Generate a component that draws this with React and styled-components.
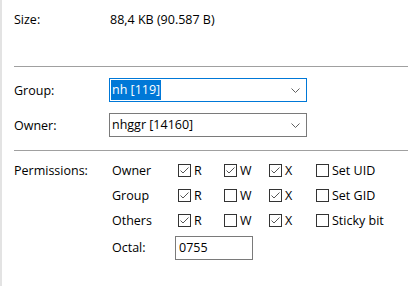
import styled, { createGlobalStyle } from 'styled-components';

const GlobalStyle = createGlobalStyle`
  html, body {
    margin: 0;
    padding: 0;
    background: #ffffff;
  }
  body {
    font-family: "Open Sans", "Noto Sans", sans-serif;
    font-size: 12.5px;
    color: #000000;
  }
`;

const Page = styled.div`
  box-sizing: border-box;
  width: 414px;
  height: 286px;
  border-left: 2px solid #e3e3e3;
  padding: 0 6px 0 12px;
  overflow: hidden;
`;

const InfoRow = styled.div`
  display: grid;
  grid-template-columns: 96px 1fr;
  align-items: center;
  height: 20px;
  padding-top: 9px;
`;

const Separator = styled.hr`
  margin: ${(p) => p.$top}px 0 0 0;
  border: 0;
  border-top: 1px solid #a0a0a0;
  height: 0;
`;

const FieldRow = styled.div`
  display: grid;
  grid-template-columns: 95px 198px;
  align-items: center;
  margin-top: ${(p) => p.$top}px;
`;

const Combo = styled.div`
  box-sizing: border-box;
  height: 24px;
  border: 1px solid ${(p) => (p.$focused ? '#0078d7' : '#7a7a7a')};
  display: flex;
  align-items: center;
  padding: 0 6px 0 1px;
  background: #fff;
`;

const ComboText = styled.span`
  flex: 1;
  display: flex;
  align-items: center;
`;

const Selected = styled.span`
  display: inline-block;
  height: 20px;
  line-height: 20px;
  padding: 0 1px 0 1px;
  background: ${(p) => (p.$active ? '#0078d7' : 'transparent')};
  color: ${(p) => (p.$active ? '#ffffff' : '#000000')};
`;

const PermSection = styled.div`
  display: grid;
  grid-template-columns: 98px 1fr;
  margin-top: 7px;
`;

const PermLabel = styled.div`
  height: 25px;
  line-height: 25px;
`;

const PermGrid = styled.div`
  display: grid;
  grid-template-columns: 66px 46px 45px 47px 1fr;
  grid-auto-rows: 25px;
  align-items: center;
`;

const CheckLabel = styled.label`
  display: flex;
  align-items: center;
  gap: 3px;
`;

const Box = styled.span`
  box-sizing: border-box;
  width: 13px;
  height: 13px;
  border: 1px solid #333333;
  background: #fff;
  display: flex;
  align-items: center;
  justify-content: center;
`;

const OctalRow = styled.div`
  grid-column: 1 / -1;
  display: grid;
  grid-template-columns: 63px 78px;
  align-items: center;
  margin-top: 4px;
`;

const Field = styled.div`
  box-sizing: border-box;
  height: 24px;
  border: 1px solid #7a7a7a;
  padding: 0 3px;
  line-height: 22px;
`;

const Chevron = () => (
  <svg width="9" height="5" viewBox="0 0 9 5">
    <path d="M0.5 0.5 L4.5 4.5 L8.5 0.5" fill="none" stroke="#606060" strokeWidth="1" />
  </svg>
);

const Check = ({ label, checked }) => (
  <CheckLabel>
    <Box>
      {checked && (
        <svg width="11" height="11" viewBox="0 0 11 11">
          <path d="M1.5 5.5 L4 8 L9.5 2.5" fill="none" stroke="#555" strokeWidth="1" />
        </svg>
      )}
    </Box>
    <span>{label}</span>
  </CheckLabel>
);

const perms = [
  { name: 'Owner', r: true, w: true, x: true, special: 'Set UID' },
  { name: 'Group', r: true, w: false, x: true, special: 'Set GID' },
  { name: 'Others', r: true, w: false, x: true, special: 'Sticky bit' },
];

function App() {
  return (
    <Page>
      <GlobalStyle />
      <InfoRow>
        <span>Size:</span>
        <span>88,4 KB (90.587 B)</span>
      </InfoRow>
      <Separator $top={37} />
      <FieldRow $top={11}>
        <span>Group:</span>
        <Combo $focused>
          <ComboText>
            <Selected $active>nh [119]</Selected>
          </ComboText>
          <Chevron />
        </Combo>
      </FieldRow>
      <FieldRow $top={11}>
        <span>Owner:</span>
        <Combo>
          <ComboText>
            <Selected>nhggr [14160]</Selected>
          </ComboText>
          <Chevron />
        </Combo>
      </FieldRow>
      <Separator $top={13} />
      <PermSection>
        <PermLabel>Permissions:</PermLabel>
        <PermGrid>
          {perms.map((p) => [
            <span key={p.name}>{p.name}</span>,
            <Check key={p.name + 'r'} label="R" checked={p.r} />,
            <Check key={p.name + 'w'} label="W" checked={p.w} />,
            <Check key={p.name + 'x'} label="X" checked={p.x} />,
            <Check key={p.name + 's'} label={p.special} checked={false} />,
          ])}
          <OctalRow>
            <span>Octal:</span>
            <Field>0755</Field>
          </OctalRow>
        </PermGrid>
      </PermSection>
    </Page>
  );
}

export default App;
